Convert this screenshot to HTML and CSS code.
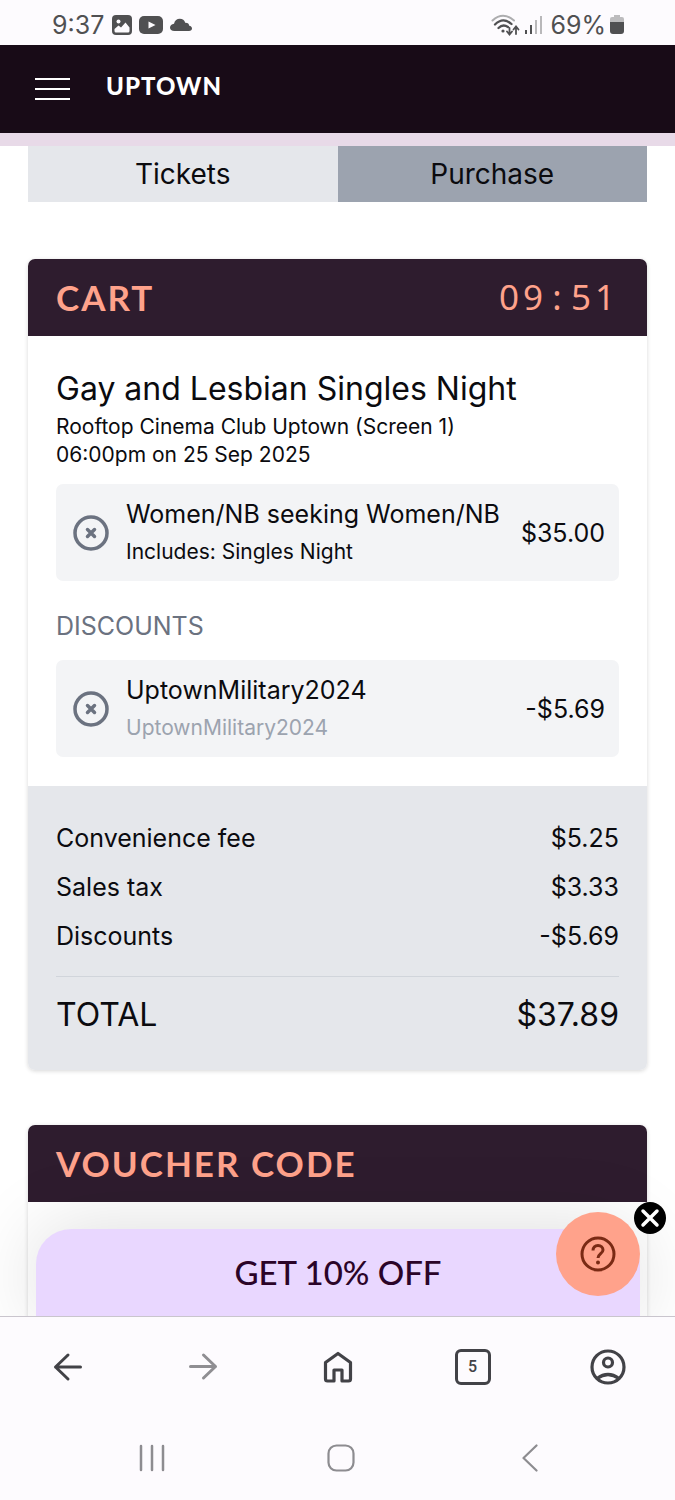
FILE: index.html
```html
<!DOCTYPE html>
<html lang="en">
<head>
<meta charset="utf-8">
<meta name="viewport" content="width=device-width, initial-scale=1">
<title>Uptown - Cart</title>
<link rel="stylesheet" href="styles.css">
</head>
<body>
<div class="screen">
  <div class="status">
    <div class="status-group">
      <span>9:37</span>
      <svg class="status-icon" width="20" height="20" viewBox="0 0 20 20"><rect width="20" height="20" rx="4" fill="#505052"/><circle cx="6.500" cy="6.500" r="2" fill="#fdfbfe"/><path d="M2.500 16v-2l4-3.500 2.500 2 4.500-5 4 5V16q0 1.500-1.500 1.500H4q-1.500 0-1.500-1.500z" fill="#fdfbfe"/></svg>
      <svg class="status-icon" width="24" height="18" viewBox="0 0 24 18"><rect width="24" height="18" rx="5" fill="#505052"/><path d="M9.500 5.500l7 3.500-7 3.500z" fill="#fdfbfe"/></svg>
      <svg class="status-icon" width="22" height="14" viewBox="0 0 22 14"><path d="M4.500 13C1.500 13 0 11.500 0 9.500S1.700 6 4 5.700C4.700 2.500 7 .8 9.800.8c2.700 0 4.800 1.500 5.400 4C18 4.700 19 6 19.200 7.700 21 8 22 9 22 10.500c0 1.500-1.200 2.500-3 2.500z" fill="#505052"/></svg>
    </div>
    <div class="status-group status-right">
      <svg width="29" height="22" viewBox="0 0 29 22" fill="none" stroke-linecap="round"><path d="M1.500 6.500Q12 -3 23 6.500" stroke="#adadaf" stroke-width="2"/><path d="M4 10.500Q12 2.500 20.500 10M7.500 14Q12 9.500 17 13" stroke="#505052" stroke-width="2.300"/><circle cx="12" cy="17" r="1.600" fill="#505052"/><path d="M18.500 14v6m-2.500-2.500 2.500 3 2.500-3M25 20v-7m-2.500 2.500 2.500-3 2.500 3" stroke="#505052" stroke-width="1.800"/></svg>
      <svg width="18" height="20" viewBox="0 0 18 20" stroke-width="2"><path d="M2 15v4M7 10v9" stroke="#505052"/><path d="M12 5v14M17 1v18" stroke="#b9b8ba"/></svg>
      <span>69%</span>
      <svg width="14" height="19" viewBox="0 0 14 19"><path d="M4 0h6v2h2q2 0 2 2v4H0V4q0-2 2-2h2z" fill="#bdbcbe"/><path d="M0 7h14v9q0 3-3 3H3q-3 0-3-3z" fill="#505052"/></svg>
    </div>
  </div>

  <header class="site-header">
    <button class="menu" aria-label="Menu"><span></span><span></span><span></span></button>
    <a class="brand" href="#">UPTOWN</a>
  </header>

  <div class="content">
    <main class="page">
      <nav class="tabs">
        <a class="tab" href="#">Tickets</a>
        <a class="tab tab-active" href="#">Purchase</a>
      </nav>

      <section class="card">
        <div class="card-head">
          <h2 class="card-title">CART</h2>
          <div class="timer"><span>09</span><span class="colon">:</span><span>51</span></div>
        </div>
        <div class="card-body">
          <h3 class="event">Gay and Lesbian Singles Night</h3>
          <p class="detail">Rooftop Cinema Club Uptown (Screen 1)</p>
          <p class="detail">06:00pm on 25 Sep 2025</p>
          <div class="item">
            <button class="remove" aria-label="Remove ticket"><svg width="36" height="36" viewBox="0 0 36 36" fill="none" stroke="#6b7280"><circle cx="18" cy="18" r="16" stroke-width="3.500"/><path d="M14.500 14.500l7 7m0-7l-7 7" stroke-width="3.500" stroke-linecap="round"/></svg></button>
            <div class="item-text">
              <p class="item-name">Women/NB seeking Women/NB</p>
              <p class="item-note">Includes: Singles Night</p>
            </div>
            <span class="price">$35.00</span>
          </div>
          <h4 class="subhead">DISCOUNTS</h4>
          <div class="item">
            <button class="remove" aria-label="Remove discount"><svg width="36" height="36" viewBox="0 0 36 36" fill="none" stroke="#6b7280"><circle cx="18" cy="18" r="16" stroke-width="3.500"/><path d="M14.500 14.500l7 7m0-7l-7 7" stroke-width="3.500" stroke-linecap="round"/></svg></button>
            <div class="item-text">
              <p class="item-name">UptownMilitary2024</p>
              <p class="item-note muted">UptownMilitary2024</p>
            </div>
            <span class="price">-$5.69</span>
          </div>
        </div>
        <dl class="summary">
          <div class="row"><dt>Convenience fee</dt><dd>$5.25</dd></div>
          <div class="row"><dt>Sales tax</dt><dd>$3.33</dd></div>
          <div class="row"><dt>Discounts</dt><dd>-$5.69</dd></div>
          <div class="row total"><dt>TOTAL</dt><dd>$37.89</dd></div>
        </dl>
      </section>

      <section class="card">
        <div class="card-head"><h2 class="card-title">VOUCHER CODE</h2></div>
        <div class="card-body voucher-body"></div>
      </section>
    </main>

    <button class="promo">GET 10% OFF</button>
    <button class="help" aria-label="Help"><svg width="36" height="36" viewBox="0 0 36 36" fill="none" stroke="#7a2a14" stroke-width="3"><circle cx="18" cy="18" r="16"/><path d="M13 14.500c0-3 2-5 5-5s5 2 5 4.500c0 3.500-5 4-5 8"/><circle cx="18" cy="26.500" r="2" fill="#7a2a14" stroke="none"/></svg></button>
    <button class="dismiss" aria-label="Close help"><svg width="32" height="32" viewBox="0 0 32 32"><circle cx="16" cy="16" r="16" fill="#000"/><path d="M9 9l14 14M23 9L9 23" stroke="#fff" stroke-width="3.500" stroke-linecap="round"/></svg></button>
  </div>

  <footer class="bottom">
    <nav class="browser-nav">
      <button aria-label="Back"><svg width="30" height="30" viewBox="0 0 30 30" fill="none" stroke="#424247" stroke-width="3" stroke-linecap="round" stroke-linejoin="round"><path d="M27.500 15H2.500M15 3L2.500 15 15 27"/></svg></button>
      <button aria-label="Forward"><svg width="30" height="30" viewBox="0 0 30 30" fill="none" stroke="#8f8e92" stroke-width="3" stroke-linecap="round" stroke-linejoin="round"><path d="M2.500 14.500h25M15.500 3L27.500 14.500 15.500 26"/></svg></button>
      <button aria-label="Home"><svg width="30" height="32" viewBox="0 0 30 32" fill="none" stroke="#424247" stroke-width="3.200" stroke-linejoin="round"><path d="M2.500 11.500L15 2.500l12.500 9V28q0 2-2 2H19V19h-8v11H4.500q-2 0-2-2z"/></svg></button>
      <button aria-label="5 open tabs"><span class="tab-count">5</span></button>
      <button aria-label="Account"><svg width="36" height="36" viewBox="0 0 36 36" fill="none" stroke="#424247" stroke-width="3.200"><circle cx="18" cy="18" r="16"/><circle cx="18" cy="13.500" r="4.500"/><path d="M7 29.500q11-8 22 0"/></svg></button>
    </nav>
    <nav class="system-nav">
      <button aria-label="Recent apps"><svg width="26" height="28" viewBox="0 0 26 28" stroke="#8d8c90" stroke-width="2.500" stroke-linecap="round"><path d="M2 2v24M13 2v24M24 2v24"/></svg></button>
      <button aria-label="Home screen"><svg width="28" height="28" viewBox="0 0 28 28" fill="none" stroke="#8d8c90" stroke-width="2.200"><rect x="1.500" y="1.500" width="25" height="25" rx="8"/></svg></button>
      <button aria-label="Go back"><svg width="16" height="28" viewBox="0 0 16 28" fill="none" stroke="#8d8c90" stroke-width="2.200" stroke-linecap="round" stroke-linejoin="round"><path d="M14.500 1.500L1.500 14l13 12.500"/></svg></button>
    </nav>
  </footer>
</div>
</body>
</html>
```
FILE: styles.css
```css
* {
  box-sizing: border-box;
}

body,
h2,
h3,
h4,
p,
dl,
dd {
  margin: 0;
}

body {
  font-family: Inter, "Liberation Sans", sans-serif;
  color: #0b0b0f;
  background: #fff;
}

button {
  padding: 0;
  border: 0;
  background: none;
  font: inherit;
  color: inherit;
}

a {
  color: inherit;
  text-decoration: none;
}

svg {
  display: block;
}

h3,
h4 {
  font-weight: 400;
}

.screen {
  display: flex;
  flex-direction: column;
  height: 100vh;
}

.status {
  display: flex;
  justify-content: space-between;
  align-items: center;
  padding: 4px 51px 0 52px;
  height: 45px;
  flex: none;
  background: #fdfbfe;
  color: #505052;
  font-size: 25px;
}

.status-group {
  display: flex;
  align-items: center;
  gap: 7px;
}

.status-group span {
  margin-right: 1px;
}

.status-right {
  gap: 4px;
}

.status-right span {
  margin: 0 0 0 4px;
}

.site-header {
  display: flex;
  align-items: center;
  gap: 36px;
  flex: none;
  height: 101px;
  padding: 0 35px;
  background: #180b17;
  border-bottom: 13px solid #e8dae8;
}

.menu {
  display: grid;
  gap: 8px;
  width: 35px;
}

.menu span {
  height: 2px;
  background: #fff;
}

.brand {
  color: #fff;
  font: 900 24px/30px Lato, sans-serif;
  letter-spacing: 1px;
  padding-bottom: 6px;
}

.content {
  position: relative;
  flex: 1;
  min-height: 0;
  overflow: hidden;
}

.page {
  height: 100%;
  overflow-y: auto;
  scrollbar-width: none;
  padding: 0 28px;
}

.tabs {
  display: grid;
  grid-template-columns: 1fr 1fr;
  margin-bottom: 57px;
}

.tab {
  background: #e5e7eb;
  font-size: 28px;
  line-height: 56px;
  text-align: center;
}

.tab-active {
  background: #9ca3af;
}

.card {
  margin-bottom: 55px;
  border-radius: 7px;
  box-shadow: 0 1px 4px rgba(0, 0, 0, 0.16);
  overflow: hidden;
}

.card-head {
  display: flex;
  justify-content: space-between;
  align-items: center;
  height: 77px;
  padding: 0 28px 2px;
  background: #2e1c2e;
  color: #ffa28b;
}

.card-title {
  font: 700 35px/42px Lato, sans-serif;
  letter-spacing: 2px;
}

.timer {
  display: flex;
  font: 400 35px/42px "Noto Sans", sans-serif;
  letter-spacing: 4px;
}

.colon {
  width: 24px;
  text-align: center;
}

.card-body {
  padding: 29px 28px;
}

.voucher-body {
  min-height: 140px;
}

.event {
  font-size: 32px;
  line-height: 48px;
}

.detail {
  font-size: 21px;
  line-height: 28px;
}

.item {
  display: flex;
  align-items: center;
  gap: 17px;
  margin-top: 15px;
  padding: 11px 14px 10px 17px;
  border-radius: 7px;
  background: #f3f4f6;
}

.remove {
  flex: none;
}

.item-text {
  flex: 1;
}

.item-name,
.price {
  font-size: 25px;
  line-height: 38px;
}

.item-note {
  font-size: 21px;
  line-height: 38px;
}

.muted {
  color: #9ca3af;
}

.subhead {
  margin: 31px 0 20px;
  color: #6b7280;
  font-size: 25px;
  line-height: 28px;
}

.summary {
  padding: 28px 28px 34px;
  background: #e5e7eb;
}

.row {
  display: flex;
  justify-content: space-between;
  font-size: 25px;
  line-height: 49px;
}

.total {
  margin-top: 15px;
  padding-top: 17px;
  border-top: 1px solid #d1d5db;
  font-size: 32px;
  line-height: 42px;
}

.promo {
  position: absolute;
  right: 35px;
  bottom: 0;
  left: 36px;
  height: 87px;
  padding-bottom: 2px;
  border-radius: 35px 35px 0 0;
  background: #e9d7ff;
  box-shadow: 0 0 80px rgba(0, 0, 0, 0.14);
  color: #2b0428;
  font: 500 33px/40px Lato, sans-serif;
}

.help {
  position: absolute;
  right: 35px;
  bottom: 20px;
  display: grid;
  place-items: center;
  width: 84px;
  height: 84px;
  border-radius: 50%;
  background: #ffa28b;
}

.dismiss {
  position: absolute;
  right: 9px;
  bottom: 82px;
}

.bottom {
  flex: none;
  border-top: 1px solid #c9c5cd;
  background: #fdfbfe;
}

.browser-nav,
.system-nav {
  display: grid;
}

.browser-nav button,
.system-nav button {
  display: grid;
  place-items: center;
}

.browser-nav {
  grid-template-columns: repeat(5, 1fr);
  height: 99px;
}

.system-nav {
  grid-template-columns: repeat(3, 1fr);
  height: 84px;
  padding: 0 51px 0 57px;
}

.tab-count {
  width: 36px;
  border: 3px solid #424247;
  border-radius: 6px;
  color: #424247;
  font: 500 16px/30px Roboto, sans-serif;
}
```
